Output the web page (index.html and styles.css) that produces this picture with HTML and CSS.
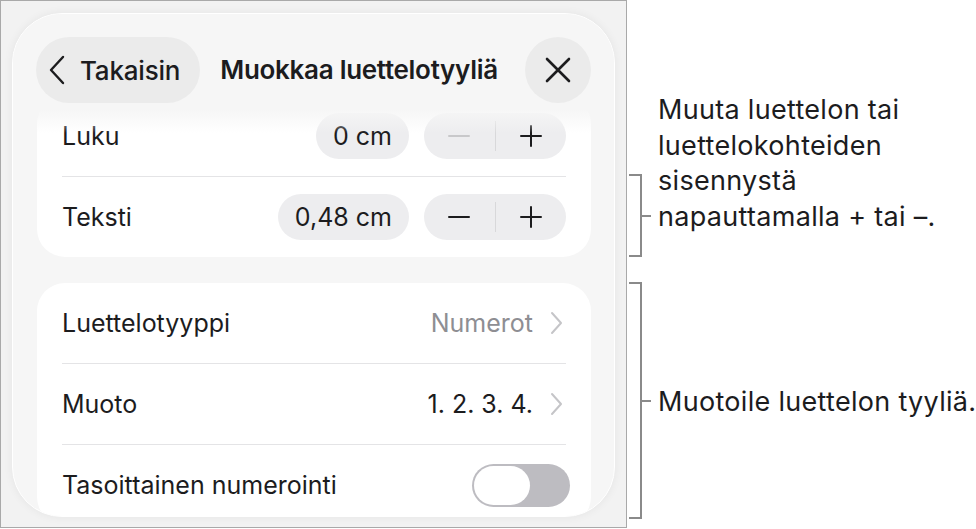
FILE: index.html
```html
<!DOCTYPE html>
<html>
<head>
  <meta charset="UTF-8">
  <title>Muokkaa luettelotyyliä</title>
  <link rel="stylesheet" href="styles.css">
</head>
<body>
  <div class="page">
    <div class="frame">
      <div class="sheet">
        <div class="header">
          <button class="back-btn">
            <svg width="18" height="30" viewBox="0 0 18 30"><path d="M15 2 L3 15 L15 28" fill="none" stroke="#1c1c1e" stroke-width="2.4" stroke-linecap="round" stroke-linejoin="round"/></svg>
            <span>Takaisin</span>
          </button>
          <h1 class="title">Muokkaa luettelotyyliä</h1>
          <button class="close-btn">
            <svg width="26" height="26" viewBox="0 0 26 26"><path d="M2 2 L24 24 M24 2 L2 24" fill="none" stroke="#1c1c1e" stroke-width="2.6" stroke-linecap="round"/></svg>
          </button>
        </div>

        <div class="content">
          <div class="card">
            <div class="row">
              <span class="label">Luku</span>
              <span class="value-pill">0 cm</span>
              <div class="stepper">
                <button class="step minus disabled"></button>
                <span class="step-divider"></span>
                <button class="step plus"></button>
              </div>
            </div>
            <div class="row">
              <span class="label">Teksti</span>
              <span class="value-pill">0,48 cm</span>
              <div class="stepper">
                <button class="step minus"></button>
                <span class="step-divider"></span>
                <button class="step plus"></button>
              </div>
            </div>
          </div>

          <div class="card">
            <div class="row">
              <span class="label">Luettelotyyppi</span>
              <span class="value muted">Numerot</span>
              <svg class="chevron" width="13" height="24" viewBox="0 0 13 24"><path d="M2 2 L11 12 L2 22" fill="none" stroke="#c5c5c8" stroke-width="2" stroke-linecap="round" stroke-linejoin="round"/></svg>
            </div>
            <div class="row">
              <span class="label">Muoto</span>
              <span class="value">1. 2. 3. 4.</span>
              <svg class="chevron" width="13" height="24" viewBox="0 0 13 24"><path d="M2 2 L11 12 L2 22" fill="none" stroke="#c5c5c8" stroke-width="2" stroke-linecap="round" stroke-linejoin="round"/></svg>
            </div>
            <div class="row">
              <span class="label">Tasoittainen numerointi</span>
              <span class="toggle"><span class="knob"></span></span>
            </div>
          </div>
        </div>
      </div>
    </div>

    <div class="notes">
      <div class="bracket bracket-indent"></div>
      <p class="note note-indent">Muuta luettelon tai luettelokohteiden sisennystä napauttamalla + tai –.</p>
      <div class="bracket bracket-style"></div>
      <p class="note note-style">Muotoile luettelon tyyliä.</p>
    </div>
  </div>
</body>
</html>
```

FILE: styles.css
```css
body {
  margin: 0;
  background: #fff;
  font-family: Inter, "Noto Sans", sans-serif;
  color: #1c1c1e;
}
button {
  font: inherit;
  color: inherit;
  border: none;
  padding: 0;
  cursor: pointer;
}
.page {
  display: flex;
  width: 976px;
  height: 529px;
}
.frame {
  box-sizing: border-box;
  width: 627px;
  height: 528px;
  border: 1px solid #a9a9a9;
  background: #f2f2f2;
  padding: 12px 11px 10px 11px;
}
.sheet {
  position: relative;
  box-sizing: border-box;
  height: 504px;
  border: 1.5px solid #fff;
  border-radius: 50px;
  background: #f6f6f6;
  box-shadow: 0 0 10px rgba(0, 0, 0, 0.06);
  overflow: hidden;
}

/* header floats over the scrolled list */
.header {
  position: absolute;
  top: 0;
  left: 0;
  right: 0;
  height: 96px;
  padding: 23px 23px 0 23px;
  display: flex;
  align-items: flex-start;
  gap: 20px;
  background: linear-gradient(#f6f6f6 80%, rgba(246, 246, 246, 0));
  z-index: 2;
}
.back-btn {
  display: flex;
  align-items: center;
  gap: 14px;
  height: 66px;
  padding: 0 20px 0 12px;
  border-radius: 33px;
  background: #ebebeb;
  font-size: 26px;
  font-weight: 500;
  letter-spacing: -0.2px;
}
.title {
  margin: 0;
  flex: 1;
  line-height: 66px;
  font-size: 26px;
  font-weight: 600;
  letter-spacing: -0.3px;
  white-space: nowrap;
}
.close-btn {
  display: flex;
  align-items: center;
  justify-content: center;
  width: 66px;
  height: 66px;
  border-radius: 50%;
  background: #ebebeb;
}

.content {
  padding: 82px 23px 0 24px;
  display: flex;
  flex-direction: column;
  gap: 26px;
}
.card {
  background: #fff;
  border-radius: 28px;
  padding: 0 25px;
}
.row {
  display: flex;
  align-items: center;
  min-height: 80px;
  font-size: 25px;
}
.row + .row {
  border-top: 1px solid #e4e4e6;
}
.label {
  flex: 1;
}
.value-pill {
  height: 46px;
  line-height: 46px;
  padding: 0 17px;
  border-radius: 23px;
  background: #ededef;
  margin-right: 15px;
}
.stepper {
  display: flex;
  align-items: center;
  width: 142px;
  height: 46px;
  border-radius: 23px;
  background: #ededef;
}
.step {
  position: relative;
  flex: 1;
  height: 100%;
  background: none;
}
.step::before,
.step.plus::after {
  content: "";
  position: absolute;
  left: 50%;
  top: 50%;
  width: 22px;
  height: 2.4px;
  margin: -1.2px 0 0 -11px;
  background: #1c1c1e;
  border-radius: 1px;
}
.step.plus::after {
  width: 2.4px;
  height: 22px;
  margin: -11px 0 0 -1.2px;
}
.step.disabled::before {
  background: #c8c8ca;
}
.step-divider {
  width: 1px;
  height: 30px;
  background: #d8d8da;
}
.value {
  margin-right: 17px;
}
.muted {
  color: #8e8e93;
}
.chevron {
  margin-right: 3px;
}
.toggle {
  box-sizing: border-box;
  width: 98px;
  height: 43px;
  padding: 2px;
  border-radius: 22px;
  background: #bdbcc1;
  margin-right: -4px;
}
.knob {
  display: block;
  width: 56px;
  height: 39px;
  border-radius: 20px;
  background: #fff;
}

/* callouts beside the screenshot */
.notes {
  position: relative;
  flex: 1;
}
.bracket {
  position: absolute;
  left: 2px;
  width: 11px;
  border: 2px solid #8a8a8a;
  border-left: none;
}
.bracket::after {
  content: "";
  position: absolute;
  left: 11px;
  top: 50%;
  width: 11px;
  height: 2px;
  margin-top: -1px;
  background: #8a8a8a;
}
.bracket-indent {
  top: 174px;
  height: 79px;
}
.bracket-style {
  top: 282px;
  height: 233px;
}
.note {
  position: absolute;
  left: 31px;
  margin: 0;
  font-size: 27px;
  line-height: 35.5px;
  letter-spacing: 0.3px;
  color: #1c1c1e;
}
.note-indent {
  top: 92px;
  width: 310px;
}
.note-style {
  top: 384px;
  white-space: nowrap;
}
```
